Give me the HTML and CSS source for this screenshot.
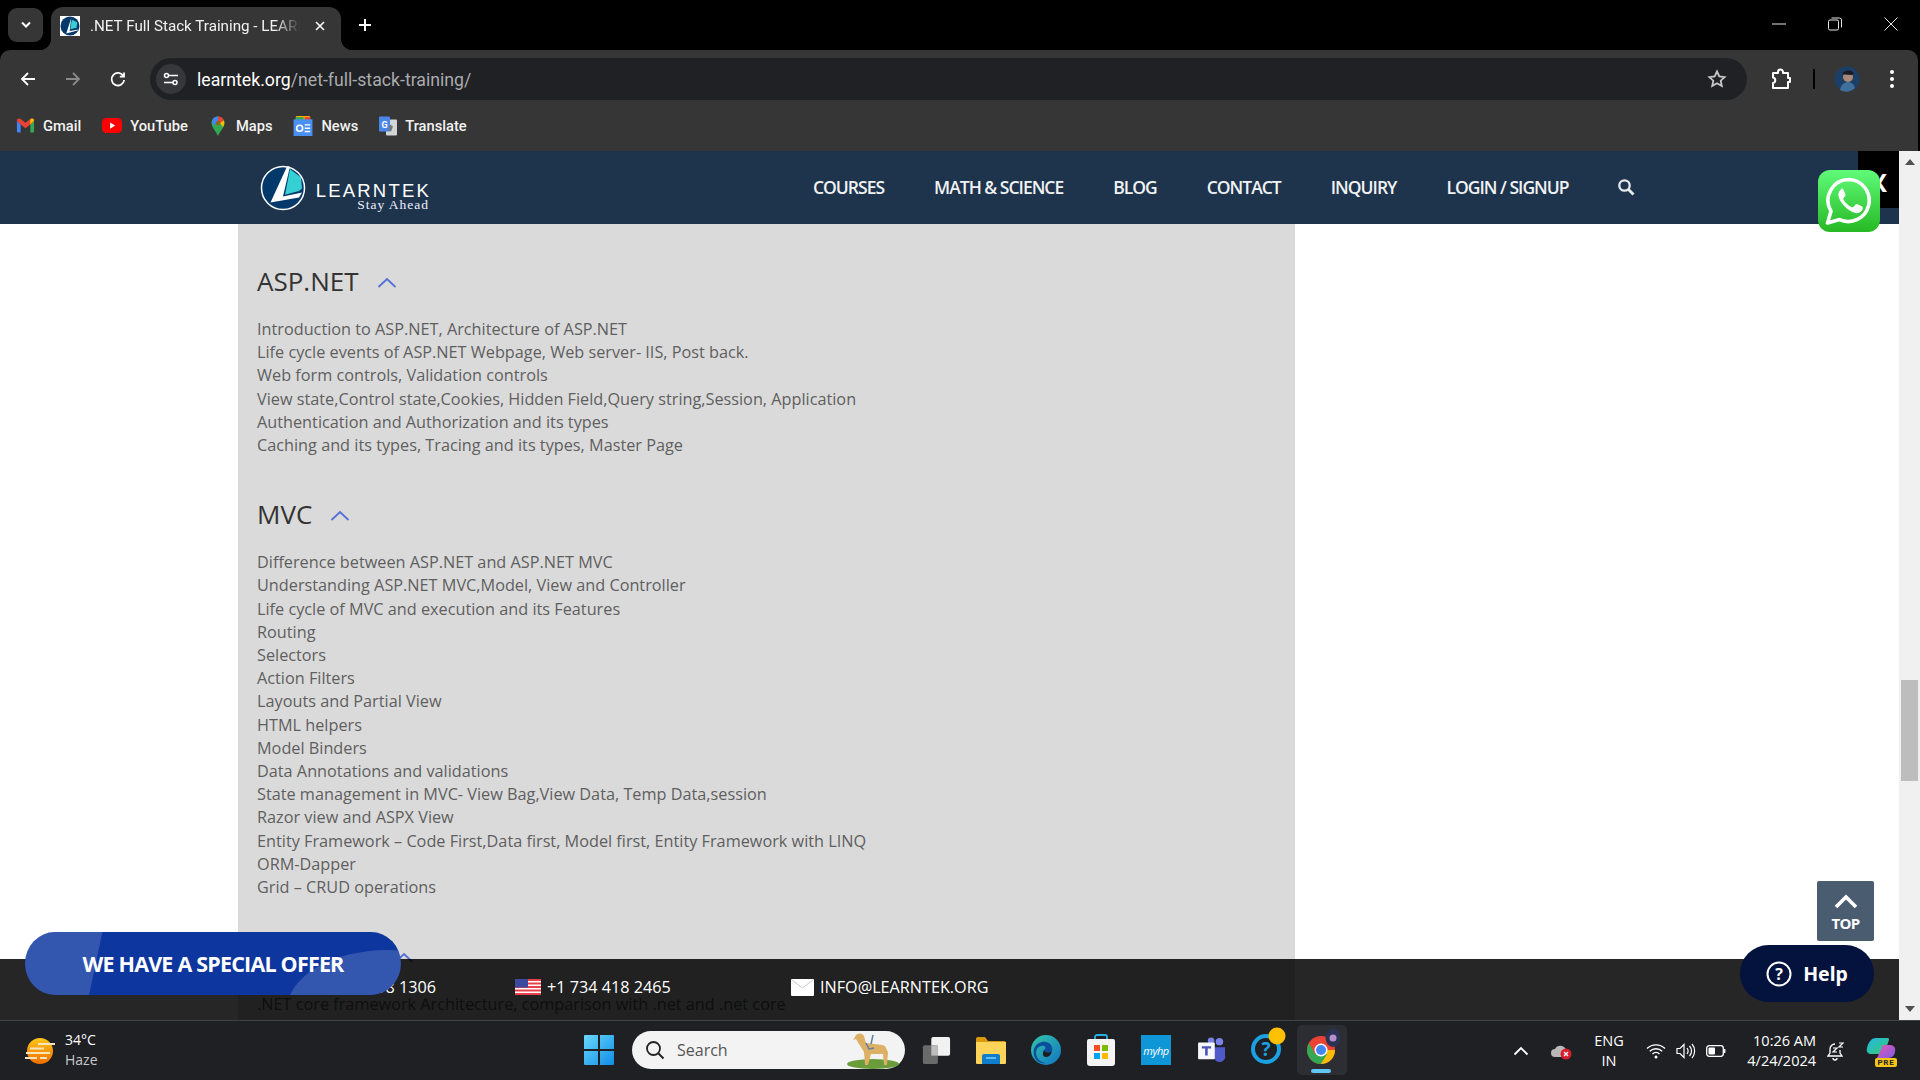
FILE: index.html
```html
<!DOCTYPE html>
<html lang="en">
<head>
<meta charset="utf-8">
<title>.NET Full Stack Training - LEARNTEK</title>
<link rel="stylesheet" href="styles.css">
</head>
<body>
<header class="browser">
  <div class="tabstrip">
    <button class="tabsearch"><svg width="12" height="8" viewBox="0 0 12 8"><path d="M2 1.500l4 4 4-4" fill="none" stroke="#fff" stroke-width="2"/></svg></button>
    <div class="tab">
      <svg class="favicon" width="20" height="20" viewBox="0 0 16 16"><rect width="16" height="16" fill="#fff"/><circle cx="8" cy="8" r="7.600" fill="#03386b"/><path d="M9 1.500L5 14l9-2.400.7-.9-7 1.300z" fill="#fff"/><path d="M9.500 3l4.300 2-.6 4.400-5 1.200z" fill="#36cfd3"/></svg>
      <span class="tabtitle">.NET Full Stack Training - LEARNTEK</span>
      <svg class="tabclose" width="12" height="12" viewBox="0 0 12 12"><path d="M2 2l8 8M10 2l-8 8" stroke="#fff" stroke-width="1.600"/></svg>
    </div>
    <svg class="newtab" width="14" height="14" viewBox="0 0 14 14"><path d="M7 1v12M1 7h12" stroke="#fff" stroke-width="2"/></svg>
    <div class="winctl">
      <svg width="14" height="14" viewBox="0 0 14 14"><path d="M0 7h14" stroke="#e6e6e6"/></svg>
      <svg width="14" height="14" viewBox="0 0 14 14"><rect x=".5" y="3" width="10" height="10" rx="1.500" fill="none" stroke="#e6e6e6"/><path d="M3.500 1h8a2 2 0 0 1 2 2v7.500" fill="none" stroke="#e6e6e6"/></svg>
      <svg width="14" height="14" viewBox="0 0 14 14"><path d="M.5.500l13 13M13.500.5l-13 13" stroke="#e6e6e6"/></svg>
    </div>
  </div>
  <div class="toolbar">
    <div class="navbtns">
      <svg width="18" height="18" viewBox="0 0 18 18"><path d="M16 9H3M9 3L3 9l6 6" fill="none" stroke="#fff" stroke-width="1.800"/></svg>
      <svg width="18" height="18" viewBox="0 0 18 18"><path d="M2 9h13M9 3l6 6-6 6" fill="none" stroke="#8a8a8a" stroke-width="1.800"/></svg>
      <svg width="18" height="18" viewBox="0 0 18 18"><path d="M14.500 6.200A6.300 6.300 0 1 0 15.200 10M15 2.500v4.200h-4.200" fill="none" stroke="#fff" stroke-width="1.800"/></svg>
    </div>
    <div class="omnibox">
      <span class="siteinfo"><svg width="16" height="16" viewBox="0 0 16 16"><path d="M6 4.500h9M1 11.500h9" stroke="#fff" stroke-width="1.600"/><circle cx="3.500" cy="4.500" r="2" fill="#36373a" stroke="#fff" stroke-width="1.500"/><circle cx="12" cy="11.500" r="2" fill="#36373a" stroke="#fff" stroke-width="1.500"/></svg></span>
      <span class="url"><b>learntek.org</b>/net-full-stack-training/</span>
      <svg class="star" width="20" height="20" viewBox="0 0 20 20"><path d="M10 2.500l2.300 5 5.300.6-3.900 3.600 1.100 5.300-4.800-2.700-4.800 2.700 1.100-5.300L2.400 8.100l5.300-.6z" fill="none" stroke="#c7c7c7" stroke-width="1.800"/></svg>
    </div>
    <div class="tools">
      <svg class="puzzle" width="22" height="22" viewBox="0 0 22 22"><path d="M3 5h5V4a2.500 2.500 0 0 1 5 0v1h5v5h2v4h-2v6H3v-5a2.800 2.800 0 0 0 0-5.500z" fill="none" stroke="#fff" stroke-width="2" stroke-linejoin="round"/></svg>
      <span class="tooldiv"></span>
      <svg class="avatar" width="26" height="26" viewBox="0 0 26 26"><circle cx="13" cy="13" r="12.500" fill="#1b3f66"/><circle cx="14" cy="11" r="5" fill="#a98a78"/><path d="M8 8c2-4 9-5 12-1l-2 2-8-.5z" fill="#1a1a22"/><path d="M6 24c1-6 5-8 8-8s6 2 7 6a12 12 0 0 1-15 2z" fill="#3f6f9b"/></svg>
      <svg class="kebab" width="6" height="20" viewBox="0 0 6 20"><circle cx="3" cy="3" r="2" fill="#fff"/><circle cx="3" cy="10" r="2" fill="#fff"/><circle cx="3" cy="17" r="2" fill="#fff"/></svg>
    </div>
  </div>
  <nav class="bookmarks">
    <a class="bm"><svg width="19" height="15" viewBox="0 0 16 14"><path d="M0 2.500v10a1 1 0 0 0 1 1h2.500V6z" fill="#4285f4"/><path d="M16 2.500v10a1 1 0 0 1-1 1h-2.500V6z" fill="#34a853"/><path d="M0 2.500C0 .5 2 0 3.500 1L8 4.500 12.500 1C14 0 16 .5 16 2.500L12.500 6 8 9.500 3.500 6z" fill="#ea4335"/><path d="M12.500 1C14 0 16 .5 16 2.500L12.500 6z" fill="#fbbc04"/></svg>Gmail</a>
    <a class="bm"><svg width="20" height="15" viewBox="0 0 16 12"><rect width="16" height="12" rx="3.500" fill="#f00"/><path d="M6.500 3.500v5l4-2.500z" fill="#fff"/></svg>YouTube</a>
    <a class="bm bm-maps"><svg width="14" height="20" viewBox="0 0 14 20"><path d="M7 20C5 15 .5 11.500.5 7a6.500 6.500 0 0 1 13 0C13.500 11.500 9 15 7 20z" fill="#34a853"/><path d="M2 2.500A6.500 6.500 0 0 1 7 .5L7 5 3 9.500C1 8 .5 5 2 2.500z" fill="#4285f4"/><path d="M7 .5a6.500 6.500 0 0 1 5.800 4L9 7 7 5z" fill="#ea4335"/><path d="M12.800 4.500c1 2.500.5 4.500-.8 6.500L9 7z" fill="#fbbc04"/><circle cx="7" cy="7" r="2.300" fill="#8a6a1a"/></svg>Maps</a>
    <a class="bm"><svg width="20" height="20" viewBox="0 0 17 18"><rect x="2" y="0" width="13" height="5" rx="1" fill="#f9ab00"/><rect x="2" y="1" width="7" height="4" fill="#34a853"/><rect x="10" y="1" width="5" height="4" fill="#ea4335"/><rect y="3" width="17" height="15" fill="#4a90f0"/><path d="M10 8h5M10 11h5M10 14h5" stroke="#fff" stroke-width="1.300"/><circle cx="5.500" cy="11" r="2.700" fill="none" stroke="#fff" stroke-width="1.500"/></svg>News</a>
    <a class="bm"><svg width="18" height="20" viewBox="0 0 18 19"><rect x="7" y="3" width="11" height="16" rx="1" fill="#d2d4d8"/><rect x="0" y="0" width="11" height="15" rx="1" fill="#4a86e8"/><text x="2.500" y="11" class="glyph">G</text><path d="M11 8l3 2-2 5-3-1" fill="#70757a"/></svg>Translate</a>
  </nav>
</header>

<div class="viewport">
  <div class="page">
    <div class="sitebar">
      <div class="brand">
        <svg width="48" height="48" viewBox="0 0 48 48"><circle cx="24" cy="24" r="21.500" fill="#03386b" stroke="#fff" stroke-width="1.500"/><path d="M28 2.500h3L24 32.500l19-4-3 5-28.500 5z" fill="#fff"/><path d="M31 5l11 8.500 1 11-3 2.500-14 3.800z" fill="#36cfd3"/></svg>
        <div class="wordmark">
          <span class="wm-main">LEARNTEK</span>
          <span class="wm-sub">Stay Ahead</span>
        </div>
      </div>
      <ul class="mainnav">
        <li>COURSES</li>
        <li>MATH &amp; SCIENCE</li>
        <li>BLOG</li>
        <li>CONTACT</li>
        <li>INQUIRY</li>
        <li>LOGIN / SIGNUP</li>
        <li class="navsearch"><svg width="18" height="18" viewBox="0 0 18 18"><circle cx="7.500" cy="7.500" r="5.200" fill="none" stroke="#e6e9ec" stroke-width="2.300"/><path d="M11.500 11.500l5 5" stroke="#e6e9ec" stroke-width="2.800"/></svg></li>
      </ul>
    </div>
    <main class="panel">
      <section class="module">
        <h3>ASP.NET <svg class="chev" width="20" height="11" viewBox="0 0 20 11"><path d="M1.500 10L10 2l8.500 8" fill="none" stroke="#5470d8" stroke-width="1.800"/></svg></h3>
        <p>Introduction to ASP.NET, Architecture of ASP.NET<br>
        Life cycle events of ASP.NET Webpage, Web server- IIS, Post back.<br>
        Web form controls, Validation controls<br>
        View state,Control state,Cookies, Hidden Field,Query string,Session, Application<br>
        Authentication and Authorization and its types<br>
        Caching and its types, Tracing and its types, Master Page</p>
      </section>
      <section class="module">
        <h3>MVC <svg class="chev" width="20" height="11" viewBox="0 0 20 11"><path d="M1.500 10L10 2l8.500 8" fill="none" stroke="#5470d8" stroke-width="1.800"/></svg></h3>
        <p>Difference between ASP.NET and ASP.NET MVC<br>
        Understanding ASP.NET MVC,Model, View and Controller<br>
        Life cycle of MVC and execution and its Features<br>
        Routing<br>
        Selectors<br>
        Action Filters<br>
        Layouts and Partial View<br>
        HTML helpers<br>
        Model Binders<br>
        Data Annotations and validations<br>
        State management in MVC- View Bag,View Data, Temp Data,session<br>
        Razor view and ASPX View<br>
        Entity Framework – Code First,Data first, Model first, Entity Framework with LINQ<br>
        ORM-Dapper<br>
        Grid – CRUD operations</p>
      </section>
      <section class="module">
        <h3>.NET Core <svg class="chev" width="20" height="11" viewBox="0 0 20 11"><path d="M1.500 10L10 2l8.500 8" fill="none" stroke="#5470d8" stroke-width="1.800"/></svg></h3>
        <p>.NET core framework Architecture, comparison with .net and .net core</p>
      </section>
    </main>
    <div class="contactbar">
      <span class="ct ct-in"><i class="flag-in"></i>+91 734 418 1306</span>
      <span class="ct ct-us"><svg width="26" height="16" viewBox="0 0 26 16"><rect width="26" height="16" fill="#fff"/><path d="M0 1h26M0 4.500h26M0 8h26M0 11.500h26M0 15h26" stroke="#e8404a" stroke-width="1.800"/><rect width="13" height="8.500" fill="#3c4a9e"/></svg>+1 734 418 2465</span>
      <span class="ct ct-mail"><svg width="23" height="17" viewBox="0 0 23 17"><rect width="23" height="17" rx="1" fill="#fff"/><path d="M1 1l10.500 8L22 1" fill="none" stroke="#c9c9c9"/></svg>INFO@LEARNTEK.ORG</span>
    </div>
    <a class="offer"><span>WE HAVE A SPECIAL OFFER</span></a>
    <a class="whats-x">X</a>
    <a class="whats"><svg width="50" height="50" viewBox="0 0 50 50"><path d="M25 3.500a21 21 0 0 0-18 31.800L3.500 47l12-3.400A21 21 0 1 0 25 3.500z" fill="none" stroke="#fff" stroke-width="3.600" stroke-linejoin="round"/><path d="M17.500 13c-1.500 1-3.500 3.500-3 7 .8 5.500 8.500 15 17 17 3.500.8 6.200-1.300 7-3.500.4-1.200.3-2.300 0-2.800l-5.300-2.700c-.7-.3-1.300 0-1.700.5l-2 2.500c-.4.400-.9.500-1.500.2-3.500-1.500-6.800-4.500-8.600-7.800-.3-.6-.2-1 .2-1.500l1.600-2c.4-.5.400-1 .2-1.600l-2.200-5.300c-.4-.8-1.700-.6-1.700-.5z" fill="#fff"/></svg></a>
    <a class="totop"><svg width="24" height="15" viewBox="0 0 24 15"><path d="M2 13L12 3l10 10" fill="none" stroke="#fff" stroke-width="3.600"/></svg><span>TOP</span></a>
    <a class="help"><svg width="26" height="26" viewBox="0 0 26 26"><circle cx="13" cy="13" r="11.500" fill="none" stroke="#fff" stroke-width="2"/><text x="13" y="19" class="glyph-q">?</text></svg><span>Help</span></a>
  </div>
  <aside class="scrollbar">
    <svg class="arrow" width="10" height="6" viewBox="0 0 10 6"><path d="M5 0l5 6H0z" fill="#505050"/></svg>
    <div class="track"><div class="thumb"></div></div>
    <svg class="arrow" width="10" height="6" viewBox="0 0 10 6"><path d="M5 6L0 0h10z" fill="#505050"/></svg>
  </aside>
</div>

<footer class="taskbar">
  <div class="weather">
    <svg width="32" height="28" viewBox="0 0 32 28"><defs><linearGradient id="sun" x1="0" y1="0" x2="0" y2="1"><stop offset="0" stop-color="#ffc61a"/><stop offset="1" stop-color="#f06d00"/></linearGradient></defs><circle cx="16" cy="14" r="13" fill="url(#sun)"/><path d="M14 7h17M6 11.500h14M2 16h24M1 21h12M16 21h7" stroke="#f5e5bb" stroke-width="2"/></svg>
    <div class="wtext"><span>34°C</span><span class="dim">Haze</span></div>
  </div>
  <div class="tbcenter">
    <svg class="ti-win" width="30" height="30" viewBox="0 0 30 30"><defs><linearGradient id="win" x1="0" y1="0" x2="1" y2="1"><stop offset="0" stop-color="#6ad8fb"/><stop offset="1" stop-color="#0f8de6"/></linearGradient></defs><path d="M0 1a1 1 0 0 1 1-1h13v14H0zM16 0h13a1 1 0 0 1 1 1v13H16zM0 16h14v14H1a1 1 0 0 1-1-1zM16 16h14v13a1 1 0 0 1-1 1H16z" fill="url(#win)"/></svg>
    <div class="tbsearch">
      <svg width="20" height="20" viewBox="0 0 20 20"><circle cx="8.500" cy="8.500" r="6.500" fill="none" stroke="#222" stroke-width="1.800"/><path d="M13 13l5.500 5.500" stroke="#222" stroke-width="2"/></svg>
      <span>Search</span>
      <svg class="dog" width="58" height="38" viewBox="0 0 58 38"><ellipse cx="32" cy="33" rx="26" ry="5" fill="#6a9c3c"/><path d="M14 6c1-4 7-5 9-1l2 7c6 1 14 1 19 3l3 6-1 13h-3l-1-11-12 0-3 11h-3l-1-13-5-8-3-5-3 1z" fill="#dcb166"/><path d="M25 12l3 6 5-1M30 13l2-9" stroke="#5b7fa8" stroke-width="1.500" fill="none"/></svg>
    </div>
    <svg class="ti" width="30" height="30" viewBox="0 0 32 32"><rect x="11" y="2" width="20" height="20" rx="2" fill="#f2f2f2"/><rect x="2" y="11" width="16" height="20" rx="2" fill="#6a6a6a"/><rect x="11" y="11" width="7" height="11" fill="#bdbdbd"/></svg>
    <svg class="ti" width="30" height="28" viewBox="0 0 30 28"><path d="M0 3a2 2 0 0 1 2-2h7l3 4h16a2 2 0 0 1 2 2v3H0z" fill="#d99b0d"/><path d="M0 6h30v21a1 1 0 0 1-1 1H1a1 1 0 0 1-1-1z" fill="#fdd35a"/><path d="M6 28v-8a2 2 0 0 1 2-2h14a2 2 0 0 1 2 2v8z" fill="#0e7dcc"/><path d="M10 22h10" stroke="#7fd0ff" stroke-width="1.500"/></svg>
    <svg class="ti" width="30" height="30" viewBox="0 0 30 30"><defs><linearGradient id="edge" x1="0" y1="0" x2="1" y2="1"><stop offset="0" stop-color="#34c6a6"/><stop offset="1" stop-color="#1174c6"/></linearGradient></defs><circle cx="15" cy="15" r="15" fill="url(#edge)"/><path d="M3 14c2-6 8-8 12-7 5 1 7 5 6 9-2 2-7 2-8-1 3-2 1-5-3-4-5 1-7 8-2 14 2 2 5 3 7 3-7 2-14-5-12-14z" fill="#0c4e9c"/><path d="M13 15c1 3 6 3 8 1-1 4-3 6-6 6-3 0-4-3-2-7z" fill="#1b1e24"/></svg>
    <svg class="ti" width="30" height="32" viewBox="0 0 30 32"><path d="M9 7V3a2 2 0 0 1 2-2h8a2 2 0 0 1 2 2v4" fill="none" stroke="#26b0e6" stroke-width="1.800"/><path d="M1 7a2 2 0 0 1 2-2h24a2 2 0 0 1 2 2v22a3 3 0 0 1-3 3H4a3 3 0 0 1-3-3z" fill="#f4f4f4"/><rect x="8" y="11" width="6" height="6" fill="#f25022"/><rect x="16" y="11" width="6" height="6" fill="#7fba00"/><rect x="8" y="19" width="6" height="6" fill="#00a4ef"/><rect x="16" y="19" width="6" height="6" fill="#ffb900"/></svg>
    <span class="myhp">myhp</span>
    <svg class="ti" width="28" height="26" viewBox="0 0 30 28"><circle cx="23" cy="5" r="4" fill="#7b83eb"/><path d="M17 11h12v8a6 6 0 0 1-6 8 7 7 0 0 1-6-5z" fill="#5059c9"/><circle cx="14" cy="4" r="3.500" fill="#7b83eb"/><rect x="0" y="6" width="18" height="18" rx="1" fill="#f6f7fb"/><path d="M4 10h10v2.500h-3.600V20H7.600v-7.500H4z" fill="#4b53bc"/></svg>
    <span class="helpapp"><svg width="36" height="38" viewBox="0 0 36 38"><circle cx="15" cy="22" r="13" fill="none" stroke="#1ba1e2" stroke-width="4"/><text x="15" y="29" class="glyph-h">?</text><circle cx="26" cy="9" r="8.500" fill="#ffc000"/></svg></span>
    <span class="chromeapp"><svg width="36" height="36" viewBox="0 0 36 36"><circle cx="15" cy="21" r="14" fill="#ea4335"/><path d="M15 35a14 14 0 0 0 14-14H15z" fill="#fbbc04"/><path d="M1 21a14 14 0 0 0 14 14l6-10H9L3 14a14 14 0 0 0-2 7z" fill="#34a853"/><circle cx="15" cy="21" r="6.500" fill="#fff"/><circle cx="15" cy="21" r="5" fill="#4285f4"/><ellipse cx="27" cy="9" rx="7.500" ry="9" fill="#2a3354"/><circle cx="27" cy="9" r="3.500" fill="#b690c8"/></svg><i class="running"></i></span>
  </div>
  <div class="tray">
    <svg width="16" height="10" viewBox="0 0 16 10"><path d="M1.500 8.500L8 2l6.500 6.500" fill="none" stroke="#fff" stroke-width="1.800"/></svg>
    <svg class="cloud" width="22" height="18" viewBox="0 0 22 18"><path d="M4 15a4 4 0 0 1 0-8 6 6 0 0 1 11 1v7z" fill="#b8b8b8"/><circle cx="15" cy="12" r="5.500" fill="#d81e2c"/><path d="M13 10l4 4M17 10l-4 4" stroke="#fff" stroke-width="1.300"/></svg>
    <div class="lang"><span>ENG</span><span>IN</span></div>
    <div class="status">
      <svg width="20" height="16" viewBox="0 0 20 16"><path d="M1 5.500a13 13 0 0 1 18 0M3.800 8.300a9 9 0 0 1 12.400 0M6.500 11a5 5 0 0 1 7 0" fill="none" stroke="#fff" stroke-width="1.400"/><circle cx="10" cy="14" r="1.500" fill="#fff"/></svg>
      <svg width="20" height="16" viewBox="0 0 20 16"><path d="M1 5.500h3l4-4v13l-4-4H1z" fill="none" stroke="#fff" stroke-width="1.200"/><path d="M11 5c1.500 2 1.500 4 0 6M13.500 3c2.500 3 2.500 7 0 10M16 1c3.500 4 3.500 10 0 14" fill="none" stroke="#fff" stroke-width="1.200"/></svg>
      <svg width="20" height="12" viewBox="0 0 20 12"><rect x=".7" y=".7" width="16.600" height="10.600" rx="2.500" fill="none" stroke="#fff" stroke-width="1.300"/><rect x="2.500" y="2.500" width="6.500" height="7" rx="1" fill="#fff"/><path d="M18.500 4v4" stroke="#fff" stroke-width="1.800"/></svg>
    </div>
    <div class="clock"><span>10:26 AM</span><span>4/24/2024</span></div>
    <svg class="bell" width="18" height="20" viewBox="0 0 18 20"><path d="M8 3a5 5 0 0 0-5 5v4l-2 3h14l-2-3V9M6 17a2 2 0 0 0 4 0" fill="none" stroke="#fff" stroke-width="1.300"/><path d="M6 7h4l-4 4h4M12 2h4l-4 4h4" fill="none" stroke="#fff" stroke-width="1.200"/></svg>
    <span class="copilot"><svg width="30" height="28" viewBox="0 0 30 28"><defs><linearGradient id="cp1" x1="0" y1="0" x2="1" y2="1"><stop offset="0" stop-color="#22b8e8"/><stop offset="1" stop-color="#37c96c"/></linearGradient><linearGradient id="cp2" x1="0" y1="0" x2="1" y2="1"><stop offset="0" stop-color="#e857b8"/><stop offset="1" stop-color="#7c5ce0"/></linearGradient></defs><path d="M10 1h11c3 0 2 2 1 5l-5 11H6c-4 0-6-2-5-6 1-5 4-10 9-10z" fill="url(#cp1)"/><path d="M17 8h7c4 0 6 3 5 7-1 5-4 6-8 6H11z" fill="url(#cp2)"/></svg><b>PRE</b></span>
  </div>
</footer>
</body>
</html>
```
FILE: styles.css
```css
* { box-sizing: border-box; }
html, body { margin: 0; height: 100%; }
body {
  width: 1920px;
  height: 1080px;
  overflow: hidden;
  display: flex;
  flex-direction: column;
  font-family: "Open Sans", "Noto Sans", sans-serif;
  background: #000;
}
svg { display: block; flex: none; }
.glyph { font: 700 9px "Roboto", sans-serif; fill: #fff; }
.glyph-q { font: 700 16px "Open Sans", sans-serif; fill: #fff; text-anchor: middle; }
.glyph-h { font: 700 19px "Open Sans", sans-serif; fill: #1ba1e2; text-anchor: middle; }

/* browser chrome */
.browser { height: 151px; flex: none; background: #000; color: #fff; }
.tabstrip { height: 50px; display: flex; align-items: flex-start; position: relative; }
.tabsearch {
  width: 35px; height: 34px; margin: 8px 0 0 8px; padding: 0;
  border: 0; border-radius: 9px; background: #363636;
  display: flex; align-items: center; justify-content: center;
}
.tab {
  width: 290px; height: 43px; margin: 7px 0 0 8px; padding: 0 15px 5px 9px;
  background: #363636; border-radius: 12px 12px 0 0;
  display: flex; align-items: center; gap: 10px;
  position: relative;
}
.tab::before, .tab::after {
  content: ""; position: absolute; bottom: 0; width: 12px; height: 12px;
}
.tab::before { left: -12px; background: radial-gradient(circle at 0 0, transparent 12px, #363636 12.5px); }
.tab::after { right: -12px; background: radial-gradient(circle at 100% 0, transparent 12px, #363636 12.5px); }
.tabtitle {
  flex: 1; min-width: 0; white-space: nowrap; overflow: hidden;
  font: 400 15.2px "Roboto", sans-serif; color: #f2f2f2;
  -webkit-mask-image: linear-gradient(90deg, #000 88%, transparent 100%);
  mask-image: linear-gradient(90deg, #000 88%, transparent 100%);
}
.tabclose { margin-left: 4px; }
.newtab { margin: 18px 0 0 17px; }
.winctl { margin-left: auto; margin-top: 17px; display: flex; gap: 42px; padding-right: 22px; }
.toolbar {
  height: 58px; margin-right: 2px; background: #363636; border-radius: 10px 10px 0 0;
  display: flex; align-items: center;
}
.navbtns { display: flex; gap: 27px; padding-left: 19px; width: 150px; flex: none; }
.omnibox {
  width: 1597px; height: 42px; background: #202124; border-radius: 21px; flex: none;
  display: flex; align-items: center; padding: 0 20px 0 6px;
}
.siteinfo {
  width: 30px; height: 30px; border-radius: 50%;
  background: #36373a; display: flex; align-items: center; justify-content: center; flex: none;
}
.url { margin-left: 11px; padding-top: 2px; font: 17.7px "Roboto", sans-serif; color: #a9abae; flex: 1; }
.url b { font-weight: 400; color: #fff; }
.tools { display: flex; align-items: center; padding-left: 23px; flex: 1; }
.puzzle { margin-right: 21px; }
.tooldiv { width: 2px; height: 20px; background: #000; margin-right: 19px; }
.avatar { margin-right: 29px; }
.bookmarks {
  height: 43px; margin-right: 2px; background: #363636;
  display: flex; align-items: center; padding: 0 0 8px 16px; gap: 21px;
}
.bm {
  display: flex; align-items: center; gap: 8px;
  font: 500 14.7px "Roboto", sans-serif; color: #f2f2f2;
}
.bm-maps { margin-left: 2px; gap: 11px; }

/* page viewport */
.viewport { height: 869px; flex: none; display: flex; background: #fff; overflow: hidden; }
.page { width: 1899px; position: relative; overflow: hidden; background: #fff; }
.sitebar {
  height: 73px; background: #1e344c;
  display: flex; align-items: center;
}
.brand { margin-left: 259px; display: flex; align-items: flex-start; width: 554px; }
.wordmark { display: flex; flex-direction: column; align-items: flex-end; margin: 19px 0 0 5px; line-height: 1; width: 117px; }
.wm-main { font: 400 18.500px/15px "Liberation Sans", sans-serif; color: #fff; letter-spacing: 2.2px; margin-right: -2px; white-space: nowrap; }
.wm-sub { font: 13.500px/13px "Liberation Serif", serif; color: #eef; letter-spacing: 1px; margin-top: 0; white-space: nowrap; }
.mainnav {
  list-style: none; margin: -2px 0 0; padding: 0;
  display: flex; align-items: center; gap: 50px;
  font-size: 17.5px; font-weight: 600; letter-spacing: -1px; color: #f0f2f4;
}
.navsearch svg { margin-left: -2px; }
.panel {
  width: 1057px; margin-left: 238px; background: #dadada;
  padding: 39px 0 200px 19px; color: #555;
}
.module { margin-bottom: 39px; }
.module h3 {
  margin: 0; font-size: 26px; font-weight: 400; line-height: 36px; color: #333;
  display: flex; align-items: center; gap: 18px;
}
.module .chev { margin-top: 3px; }
.module p { margin: 19px 0 0; font-size: 16.25px; line-height: 23.2px; color: #5f5f5f; }

.contactbar {
  position: absolute; left: 0; right: 0; bottom: 0; height: 61px;
  background: rgba(0, 0, 0, .85);
  color: #fff; font-size: 16.2px;
}
.ct { position: absolute; top: 17px; display: flex; align-items: center; gap: 6px; white-space: nowrap; }
.ct-in { left: 274px; gap: 3px; }
.flag-in { width: 26px; height: 16px; display: block; background: linear-gradient(#f93 33%, #fff 33% 66%, #138808 66%); }
.ct-us { left: 515px; }
.ct-mail { left: 791px; gap: 6px; }
.offer {
  position: absolute; left: 25px; top: 781px; width: 376px; height: 63px;
  border-radius: 38px / 40px;
  background: #0d369f;
  color: #fff; font-weight: 700; font-size: 21.5px; letter-spacing: -.8px;
  display: flex; align-items: center; justify-content: center; white-space: nowrap;
  overflow: hidden;
}
.offer span { position: relative; z-index: 1; }
.offer::before {
  content: ""; position: absolute; left: -30px; top: -10px; width: 100px; height: 90px;
  background: rgba(255, 255, 255, .16); transform: skewX(-12deg);
}
.offer::after {
  content: ""; position: absolute; left: 262px; top: 18px; width: 200px; height: 120px;
  border-radius: 50%; background: rgba(255, 255, 255, .16);
}
.whats-x {
  position: absolute; right: 0; top: 0; width: 41px; height: 57px; background: #000;
  color: #fff; font-size: 25px; font-weight: 700;
  display: flex; align-items: center; justify-content: center; padding-top: 5px;
}
.whats {
  position: absolute; left: 1818px; top: 19px; width: 62px; height: 62px;
  border-radius: 12px;
  background: linear-gradient(#5ffb79, #27b924);
  display: flex; align-items: center; justify-content: center;
}
.totop {
  position: absolute; left: 1817px; top: 730px; width: 57px; height: 60px;
  background: #4a5c70; border-radius: 2px; color: #fff;
  display: flex; flex-direction: column; align-items: center; padding-top: 13px;
  font-size: 15px; font-weight: 700; letter-spacing: -.6px; line-height: 16px;
}
.totop span { margin-top: 6px; }
.help {
  position: absolute; left: 1740px; top: 794px; width: 134px; height: 57px;
  border-radius: 29px; background: #04123e; color: #fff;
  display: flex; align-items: center; justify-content: center; gap: 11px;
  font: 700 19.5px "Noto Sans", sans-serif;
}

.scrollbar { width: 21px; background: #f0f0f0; display: flex; flex-direction: column; align-items: center; }
.arrow { margin: 8px 0; }
.track { flex: 1; width: 100%; position: relative; }
.thumb { position: absolute; left: 2px; right: 2px; top: 507px; height: 101px; background: #bdbdbd; }

/* taskbar */
.taskbar {
  height: 60px; flex: none; background: #1e2024; border-top: 1px solid #3f4144;
  display: flex; align-items: center; color: #fff;
  font-family: "Open Sans", sans-serif;
}
.weather { display: flex; align-items: center; gap: 9px; margin-left: 24px; font-size: 14px; line-height: 20px; width: 560px; flex: none; }
.wtext { display: flex; flex-direction: column; margin-top: -2px; }
.wtext .dim { color: #c8c8c8; }
.tbcenter { display: flex; align-items: center; flex: none; margin-top: -1px; }
.ti-win { margin-right: 18px; }
.tbsearch {
  width: 273px; height: 38px; background: #f3f3f3; border-radius: 19px;
  display: flex; align-items: center; padding: 0 6px 0 13px; gap: 12px;
  color: #555; font-size: 16px; margin-right: 16px;
}
.dog { margin-left: auto; }
.ti { margin-right: 25px; }
.myhp {
  width: 30px; height: 30px; background: #0f96d6; color: #fff; font-size: 11px; font-style: italic;
  display: flex; align-items: center; justify-content: center; letter-spacing: -.5px; flex: none; margin-right: 27px;
}
.helpapp { width: 36px; margin-right: 10px; flex: none; transform: translateY(-4px); }
.chromeapp {
  width: 50px; height: 50px; background: #2c2e33; border-radius: 5px; position: relative; flex: none;
  display: flex; align-items: center; justify-content: center;
}
.chromeapp svg { transform: translate(2px, -3px); }
.running { position: absolute; left: 14px; bottom: 2px; width: 20px; height: 4px; border-radius: 2px; background: #62c6f5; }
.tray { display: flex; align-items: center; flex: 1; margin-left: 166px; }
.cloud { margin-left: 22px; }
.lang { display: flex; flex-direction: column; align-items: center; font-size: 14.5px; line-height: 20px; margin-left: 21px; width: 30px; }
.status { display: flex; align-items: center; gap: 10px; margin-left: 22px; }
.clock { display: flex; flex-direction: column; align-items: flex-end; font-size: 14.5px; line-height: 20px; margin-left: 21px; width: 69px; white-space: nowrap; }
.bell { margin-left: 11px; }
.copilot { position: relative; margin-left: 21px; width: 30px; height: 28px; }
.copilot b {
  position: absolute; right: -1px; bottom: -2px; width: 22px; height: 9px; background: #f5c518; color: #222;
  font: 700 8px/9px "Roboto", sans-serif; letter-spacing: .8px; text-align: center; border-radius: 2px;
}
```
